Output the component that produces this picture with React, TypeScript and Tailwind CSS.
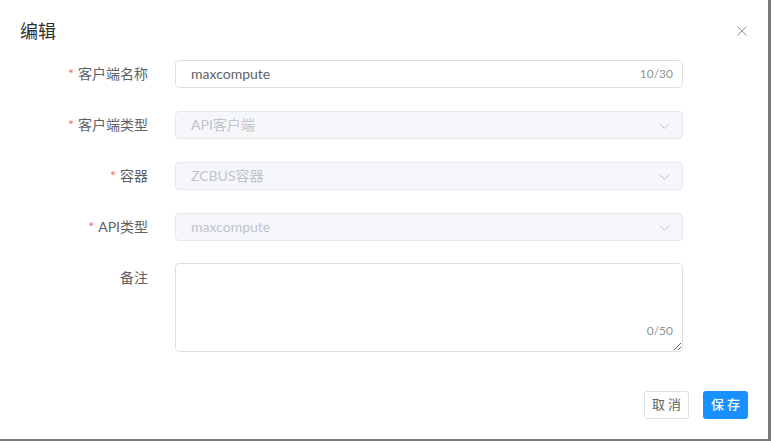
import React from 'react';

const font = { fontFamily: 'Lato, "Noto Sans CJK SC", sans-serif' };

const Chevron: React.FC = () => (
  <svg width="11" height="6" viewBox="0 0 11 6" fill="none" className="absolute right-[12px] top-[11px]">
    <path d="M0.5 0.5 L5.5 5.3 L10.5 0.5" stroke="#C0C4CC" strokeWidth="1" />
  </svg>
);

const Label: React.FC<{ text: string; required?: boolean }> = ({ text, required }) => (
  <div className="w-[149px] pr-[1px] text-right text-[14px] text-[#606266] leading-[28px]">
    {required && <span className="text-[#F56C6C] mr-[4px]">*</span>}
    {text}
  </div>
);

const DisabledSelect: React.FC<{ value: string }> = ({ value }) => (
  <div className="relative w-[508px] h-[28px] rounded-[4px] border border-[#E4E7ED] bg-[#F5F7FA] px-[15px] text-[14px] leading-[26px] text-[#C0C4CC]">
    {value}
    <Chevron />
  </div>
);

export default function App() {
  return (
    <div className="w-[771px] h-[441px] bg-[#7a7a7a] overflow-hidden" style={font}>
      <div className="w-[768px] h-[439px] bg-white flex flex-col">
        <div className="relative px-[20px] pt-[19px]">
          <div className="text-[18px] leading-[24px] text-[#303133]">编辑</div>
          <svg width="10" height="10" viewBox="0 0 10 10" className="absolute left-[737px] top-[26px]">
            <path d="M0.5 0.5 L9.5 9.5 M9.5 0.5 L0.5 9.5" stroke="#909399" strokeWidth="1" />
          </svg>
        </div>

        <div className="mt-[17px] flex flex-col gap-[23px]">
          <div className="flex items-center gap-[26px]">
            <Label text="客户端名称" required />
            <div className="relative w-[508px] h-[28px] rounded-[4px] border border-[#DCDFE6] bg-white px-[15px] text-[14px] leading-[26px] text-[#606266]">
              maxcompute
              <span className="absolute right-[9px] top-0 text-[12px] text-[#909399]">10/30</span>
            </div>
          </div>
          <div className="flex items-center gap-[26px]">
            <Label text="客户端类型" required />
            <DisabledSelect value="API客户端" />
          </div>
          <div className="flex items-center gap-[26px]">
            <Label text="容器" required />
            <DisabledSelect value="ZCBUS容器" />
          </div>
          <div className="flex items-center gap-[26px]">
            <Label text="API类型" required />
            <DisabledSelect value="maxcompute" />
          </div>
          <div className="flex items-start gap-[26px] -mt-[1px]">
            <div className="w-[149px] pr-[1px] text-right text-[14px] text-[#606266] leading-[30px]">备注</div>
            <div className="relative w-[508px] h-[89px]">
              <textarea
                className="block w-full h-full rounded-[4px] border border-[#DCDFE6] bg-white px-[15px] py-[5px] text-[14px] text-[#606266] outline-none"
                style={font}
              />
              <span className="absolute right-[10px] bottom-[13px] text-[12px] leading-[16px] text-[#909399]">0/50</span>
            </div>
          </div>
        </div>

        <div className="mt-auto mb-[20px] pr-[20px] flex justify-end gap-[14px]">
          <button className="w-[45px] h-[28px] rounded-[3px] border border-[#DCDFE6] bg-white pl-[3px] text-[13px] text-[#606266] tracking-[3px]">
            取消
          </button>
          <button className="w-[45px] h-[28px] rounded-[3px] bg-[#1890FF] pl-[3px] text-[13px] font-medium text-white tracking-[3px]">
            保存
          </button>
        </div>
      </div>
    </div>
  );
}
